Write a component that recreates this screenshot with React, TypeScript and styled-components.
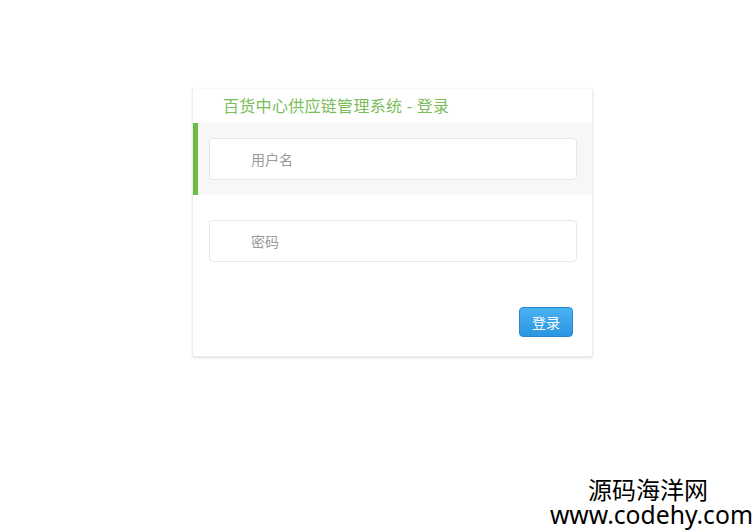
import React from 'react'
import styled, { createGlobalStyle } from 'styled-components'

function App() {
  return (
    <>
      <GlobalStyle />
      <Page>
        <LoginCard>
          <Title>百货中心供应链管理系统 - 登录</Title>
          <FieldRow active>
            <TextInput type="text" placeholder="用户名" />
          </FieldRow>
          <FieldRow>
            <TextInput type="password" placeholder="密码" />
          </FieldRow>
          <Actions>
            <LoginButton type="button">登录</LoginButton>
          </Actions>
        </LoginCard>
      </Page>
      <Watermark>
        <WatermarkName>源码海洋网</WatermarkName>
        <WatermarkUrl>www.codehy.com</WatermarkUrl>
      </Watermark>
    </>
  )
}

const GlobalStyle = createGlobalStyle`
  html, body {
    margin: 0;
    padding: 0;
    background: #fff;
    font-family: "Noto Sans", "Noto Sans CJK SC", sans-serif;
  }
`
const Page = styled.div`
  width: 756px;
  height: 532px;
  padding: 88px 0 0 192px;
  box-sizing: border-box;
`
const LoginCard = styled.div`
  width: 401px;
  box-sizing: border-box;
  background: #fff;
  border: 1px solid #ececec;
  border-top-color: #f8f8f8;
  border-radius: 3px;
  box-shadow: 0 1px 2px rgba(0, 0, 0, 0.12);
  padding-bottom: 19px;
`
const Title = styled.h3`
  margin: 0;
  height: 34px;
  padding: 5px 0 0 30px;
  box-sizing: border-box;
  font-size: 16px;
  font-weight: normal;
  letter-spacing: 0.3px;
  color: #7abd5a;
  line-height: 24px;
  white-space: pre;
`
const FieldRow = styled.div<{ active?: boolean }>`
  padding: 15px 15px 15px ${p => (p.active ? '11px' : '16px')};
  margin-bottom: 10px;
  background: ${p => (p.active ? '#f7f7f7' : '#fff')};
  border-left: ${p => (p.active ? '5px solid #6dbb47' : 'none')};
`
const TextInput = styled.input`
  display: block;
  width: 368px;
  height: 42px;
  box-sizing: border-box;
  border: 1px solid #e6e6e6;
  border-radius: 4px;
  background: #fff;
  padding: 0 0 0 41px;
  font-family: "Noto Sans", "Noto Sans CJK SC", sans-serif;
  font-size: 14px;
  color: #333;
  outline: none;

  &::placeholder {
    color: #999;
  }
`
const Actions = styled.div`
  display: flex;
  justify-content: flex-end;
  padding: 20px 19px 0 0;
`
const LoginButton = styled.button`
  width: 54px;
  height: 30px;
  border: 1px solid #2987cf;
  border-radius: 4px;
  background: linear-gradient(#4ab2f2, #2b95e2);
  color: #fff;
  font-family: "Noto Sans", "Noto Sans CJK SC", sans-serif;
  font-size: 14px;
  padding: 0;
  cursor: pointer;
`
const Watermark = styled.div`
  position: absolute;
  right: 3px;
  bottom: 4px;
  display: flex;
  flex-direction: column;
  align-items: center;
  color: #000;
  font-family: "Noto Sans", "Noto Sans CJK SC", sans-serif;
`
const WatermarkName = styled.div`
  font-size: 24px;
  line-height: 24px;
  margin-right: 7px;
`
const WatermarkUrl = styled.div`
  font-size: 24.7px;
  line-height: 26px;
`

export default App
